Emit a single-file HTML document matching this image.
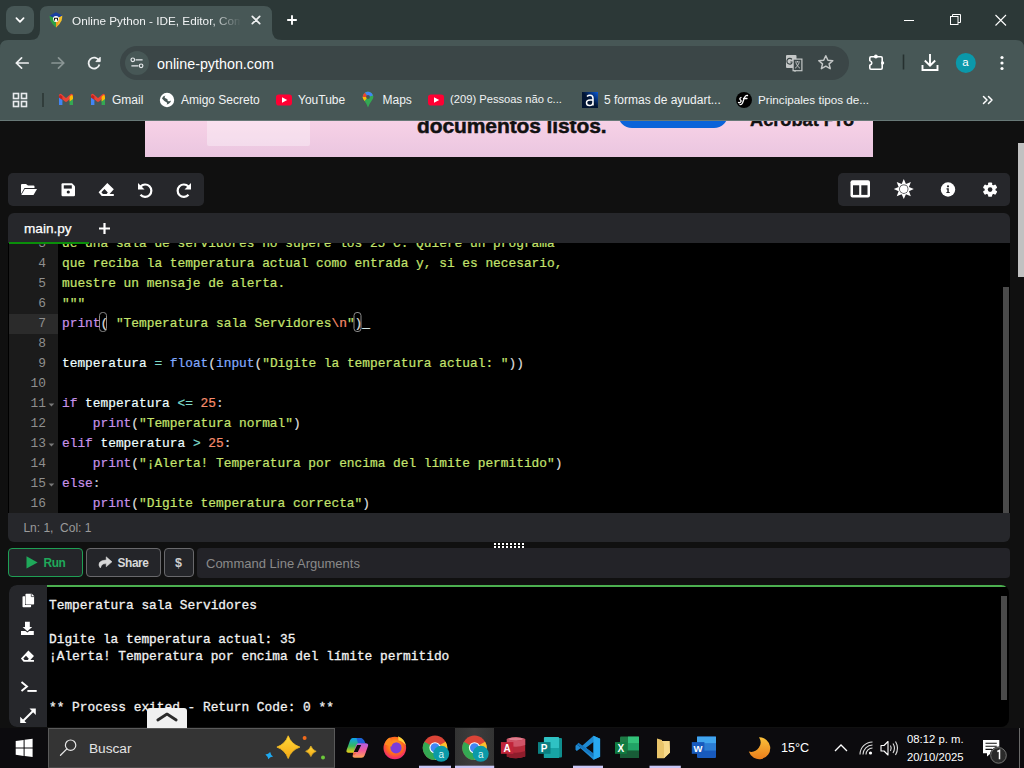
<!DOCTYPE html>
<html><head><meta charset="utf-8">
<style>
*{box-sizing:border-box;margin:0;padding:0}
html,body{width:1024px;height:768px;overflow:hidden;background:#101010;font-family:"Liberation Sans",sans-serif}
.a{position:absolute}
svg{position:absolute;overflow:visible}
#tabstrip{left:0;top:0;width:1024px;height:40px;background:#2c3837}
#toolbar{left:0;top:40px;width:1024px;height:80px;background:#475756}
.ui{color:#f1f3f4;font-size:12.5px;white-space:nowrap}
.mono{font-family:"Liberation Mono",monospace}
pre.mono{font-size:12.83px;line-height:20px}
#code{-webkit-text-stroke:0.2px currentColor}
.panel{background:#26272b}
</style></head><body>
<!-- ===== CHROME ===== -->
<div id="tabstrip" class="a"></div>
<div class="a" style="left:6px;top:6px;width:28px;height:28px;border-radius:8px;background:#475756"></div>
<svg style="left:0;top:0" width="1024" height="40"><path d="M16.4 18.2 L20 21.8 L23.6 18.2" fill="none" stroke="#fff" stroke-width="1.7" stroke-linecap="round" stroke-linejoin="round"/></svg>
<div id="toolbar" class="a"></div>
<div class="a" style="left:0;top:120px;width:1024px;height:1px;background:#687977"></div>
<svg style="left:0;top:0" width="1024" height="50">
 <path d="M30 40 Q40 40 40 30 L40 14 Q40 6 48 6 L264 6 Q272 6 272 14 L272 30 Q272 40 282 40 Z" fill="#475756"/>
 <path d="M0 40 L8 40 Q0 40 0 48 Z" fill="#2c3837"/><path d="M1024 40 L1016 40 Q1024 40 1024 48 Z" fill="#2c3837"/>
</svg>
<!-- favicon -->
<svg style="left:0;top:0" width="80" height="40">
 <path d="M49.6 15.7 L56 18.5 L56 27.4 Q51.8 24 50.3 20.5 Q49.6 18 49.6 15.7Z" fill="#2ea043"/>
 <path d="M62.3 15.6 L56 18.5 L56 27.4 Q60.2 24 61.6 20.5 Q62.3 18 62.3 15.6Z" fill="#f5c12a"/>
 <path d="M56 27.4 L56 22 L59 21 Q58 25 56 27.4Z" fill="#f59a22"/>
 <path d="M55.9 12.3 L62.3 15.6 L56 18.8 L49.6 15.7Z" fill="#1a3fa0"/>
 <circle cx="56" cy="19.1" r="3" fill="#fff"/>
 <path d="M54.2 20.6 L54.6 18.3 L57.4 18.3 L57.8 20.6" fill="none" stroke="#111" stroke-width="1.1"/>
</svg>
<div class="a ui" style="left:72px;top:14px;font-size:11.75px;color:#f1f3f4;width:169px;overflow:hidden;-webkit-mask-image:linear-gradient(90deg,#000 82%,transparent 100%)">Online Python - IDE, Editor, Compiler</div>
<svg style="left:0;top:0" width="1024" height="40">
 <path d="M252.3 16.3 L259.7 23.7 M259.7 16.3 L252.3 23.7" stroke="#eef0f1" stroke-width="1.7" stroke-linecap="round"/>
 <path d="M292 15.2 L292 24.8 M287.2 20 L296.8 20" stroke="#fff" stroke-width="1.9" stroke-linecap="butt"/>
 <path d="M904 20.5 L914 20.5" stroke="#fff" stroke-width="1"/>
 <rect x="950.5" y="16.5" width="7.5" height="8" fill="none" stroke="#fff" stroke-width="1"/>
 <path d="M952.5 16.5 L952.5 14.5 L960.5 14.5 L960.5 22.5 L958 22.5" fill="none" stroke="#fff" stroke-width="1"/>
 <path d="M995.5 15 L1006 25.5 M1006 15 L995.5 25.5" stroke="#fff" stroke-width="1.1"/>
</svg>
<!-- nav -->
<svg style="left:0;top:40px" width="1024" height="80">
 <path d="M28.2 23 L16.3 23 M21.6 17.8 L16.3 23 L21.6 28.2" fill="none" stroke="#eef0f1" stroke-width="1.7" stroke-linecap="round" stroke-linejoin="round"/>
 <path d="M52 23 L63.8 23 M58.5 17.8 L63.8 23 L58.5 28.2" fill="none" stroke="#8b9695" stroke-width="1.7" stroke-linecap="round" stroke-linejoin="round"/>
 <path d="M99 20.6 A5.5 5.5 0 1 0 99.4 24.5" fill="none" stroke="#eef0f1" stroke-width="1.8"/>
 <path d="M100.2 17.3 L100.2 21.6 L95.9 21.6 Z" fill="#eef0f1" stroke="#eef0f1" stroke-width="1" stroke-linejoin="round"/>
</svg>
<!-- omnibox -->
<div class="a" style="left:120px;top:46px;width:729px;height:34px;border-radius:17px;background:#3b4647"></div>
<div class="a" style="left:125px;top:51px;width:24px;height:24px;border-radius:12px;background:#475756"></div>
<svg style="left:0;top:40px" width="1024" height="80">
 <circle cx="132.8" cy="19.8" r="1.8" fill="none" stroke="#e8eaed" stroke-width="1.2"/>
 <path d="M135.6 19.8 L142.6 19.8 M131.4 25.8 L138.4 25.8" stroke="#e8eaed" stroke-width="1.3"/>
 <circle cx="141.1" cy="25.8" r="1.8" fill="none" stroke="#e8eaed" stroke-width="1.2"/>
</svg>
<div class="a ui" style="left:157px;top:55.5px;font-size:14.3px;color:#fff">online-python.com</div>
<!-- translate & star -->
<svg style="left:0;top:40px" width="1024" height="80">
 <rect x="786" y="15" width="10.5" height="13" rx="1" fill="#c4c7c7"/>
 <path d="M792 19.3 A2.9 2.9 0 1 0 792.6 22 L790.3 22" fill="none" stroke="#3b4647" stroke-width="1.2"/>
 <rect x="793.1" y="19.1" width="8.8" height="11.6" fill="#3b4647" stroke="#c4c7c7" stroke-width="1.2"/>
 <path d="M793.5 30.5 L795 32 L796.5 30.5Z" fill="#c4c7c7"/>
 <path d="M795 22 L800 22 M797.5 21 L797.5 22 M796 23 Q797.5 27 800 28.3 M799 23 Q797.5 27 795 28.3" fill="none" stroke="#c4c7c7" stroke-width="0.9"/>
 <path d="M825.8 15.8 L827.9 20.3 L832.8 20.7 L829.1 23.9 L830.2 28.7 L825.8 26.2 L821.4 28.7 L822.5 23.9 L818.8 20.7 L823.7 20.3 Z" fill="none" stroke="#c4c7c7" stroke-width="1.5" stroke-linejoin="round"/>
</svg>
<!-- right toolbar icons -->
<svg style="left:0;top:40px" width="1024" height="80">
 <path d="M871 16.8 L881 16.8 Q882.2 16.8 882.2 18 L882.2 28 Q882.2 29.2 881 29.2 L871 29.2 Q869.8 29.2 869.8 28 L869.8 25.2 Q871.8 24.2 871.8 22.9 Q871.8 21.6 869.8 20.6 L869.8 18 Q869.8 16.8 871 16.8Z" fill="none" stroke="#fff" stroke-width="1.6" stroke-linejoin="round"/><circle cx="875.9" cy="16.5" r="1.9" fill="#fff"/><circle cx="882.6" cy="22.9" r="1.6" fill="#fff"/>
 <path d="M903.5 14.5 L903.5 29.5" stroke="#26302f" stroke-width="1.6"/>
 <path d="M930 14 L930 25.5 M924.8 20.5 L930 25.7 L935.2 20.5 M922.5 25 L922.5 30 L937.5 30 L937.5 25" fill="none" stroke="#fff" stroke-width="1.9" stroke-linejoin="miter"/>
 <circle cx="965.8" cy="22.9" r="10" fill="#0b98aa"/>
 <circle cx="1002" cy="17.5" r="1.6" fill="#fff"/><circle cx="1002" cy="23" r="1.6" fill="#fff"/><circle cx="1002" cy="28.5" r="1.6" fill="#fff"/>
</svg>
<div class="a ui" style="left:962.3px;top:55.8px;font-size:11.5px;color:#fff">a</div>
<!-- bookmarks -->
<svg style="left:0;top:84px" width="1024" height="36">
 <g fill="none" stroke="#e8eaed" stroke-width="1.6">
  <rect x="13.5" y="9.5" width="5" height="5"/><rect x="21.5" y="9.5" width="5" height="5"/>
  <rect x="13.5" y="17.5" width="5" height="5"/><rect x="21.5" y="17.5" width="5" height="5"/>
 </g>
 <path d="M43 9 L43 23" stroke="#2a3433" stroke-width="1.5"/>
</svg>
<svg style="left:0;top:0" width="1024" height="120">
 <!-- gmail 1 & 2 -->
 <g id="gm">
  <path d="M59 97 L59 105 L62.4 105 L62.4 99.5 Z" fill="#4285f4"/>
  <path d="M69.6 99.5 L69.6 105 L73 105 L73 97 Z" fill="#34a853"/>
  <path d="M60.5 95.5 L66 100.3 L71.5 95.5" fill="none" stroke="#ea4335" stroke-width="3.2" stroke-linejoin="round" stroke-linecap="round"/>
  <path d="M69.6 96.7 L71.5 95 Q73 95 73 97 L73 99 L69.6 101.5Z" fill="#fbbc04"/>
  <path d="M59 97 Q59 95 60.5 95 L62.4 96.5 L62.4 100 L59 97.5Z" fill="#c5221f"/>
 </g>
 <use href="#gm" x="32"/>
 <!-- globe -->
 <circle cx="167" cy="100" r="7.2" fill="#fff"/>
 <path d="M162 98.5 Q162.5 96 165.5 95.5 Q163.5 97.5 166 98.5 Q168.5 99.5 167.5 101 Q170 101.5 171 100.5 Q170.5 103.5 166.5 104.5 Q168 103 166 102 Q164 101 162 98.5Z" fill="#475756"/>
 <!-- youtube -->
 <rect x="276" y="94.5" width="16" height="11" rx="2.8" fill="#ff0033"/>
 <path d="M282 97.3 L287.2 100 L282 102.7Z" fill="#fff"/>
 <rect x="428" y="94.5" width="16" height="11" rx="2.8" fill="#ff0033"/>
 <path d="M434 97.3 L439.2 100 L434 102.7Z" fill="#fff"/>
 <!-- maps -->
 <path d="M368 107.5 Q366.5 103.5 364.5 101 Q362.6 98.5 362.6 97 A5.4 5.4 0 0 1 373.4 97 Q373.4 98.5 371.5 101 Q369.5 103.5 368 107.5Z" fill="#34a853"/>
 <path d="M362.6 97 A5.4 5.4 0 0 1 365 92.6 L368 97 Z" fill="#ea4335"/>
 <path d="M365 92.6 A5.4 5.4 0 0 1 373 95.5 L368 97Z" fill="#4285f4"/>
 <path d="M362.6 97 Q362.6 98.5 364.5 101 L368 97Z" fill="#fbbc04"/>
 <circle cx="368" cy="97" r="1.9" fill="#475756"/>
 <!-- a icon -->
 <defs><linearGradient id="ag" x1="0" y1="1" x2="1" y2="0"><stop offset="0.5" stop-color="#021533"/><stop offset="1" stop-color="#0a5ad8"/></linearGradient></defs>
 <rect x="582" y="92" width="16" height="16" fill="url(#ag)"/>
 <path d="M587 96.5 Q588 95.3 590 95.3 Q593 95.3 593 98.5 L593 105.5 M593 100 L590 100 Q586.5 100 586.5 102.8 Q586.5 105.6 589.5 105.6 Q593 105.6 593 102" fill="none" stroke="#fff" stroke-width="1.5"/>
 <!-- sf -->
 <circle cx="744" cy="100" r="8" fill="#000"/>
 <path d="M741 97.5 Q739 98.5 740.5 100 Q742 101 740 102.5 Q739 103 738.5 102.5 M747.5 95.5 Q745.5 95 744.5 97.5 L742.5 103 Q741.5 105 740 104.5 M743.5 98.5 L747 98.5" fill="none" stroke="#fff" stroke-width="1.3" stroke-linecap="round"/>
 <!-- chevrons -->
 <path d="M983.5 96.5 L987 100 L983.5 103.5 M988.5 96.5 L992 100 L988.5 103.5" fill="none" stroke="#fff" stroke-width="1.5" stroke-linecap="round" stroke-linejoin="round"/>
</svg>
<div class="a ui" style="left:112px;top:93px;font-size:12px">Gmail</div>
<div class="a ui" style="left:181px;top:93px;font-size:12px">Amigo Secreto</div>
<div class="a ui" style="left:298px;top:93px;font-size:12px">YouTube</div>
<div class="a ui" style="left:382.5px;top:93px;font-size:12px">Maps</div>
<div class="a ui" style="left:450px;top:92.5px;font-size:11.2px;top:93px">(209) Pessoas não c...</div>
<div class="a ui" style="left:604px;top:93px;font-size:12px">5 formas de ayudart...</div>
<div class="a ui" style="left:758px;top:92.5px;font-size:11.7px">Principales tipos de...</div>

<!-- ===== PAGE ===== -->
<div class="a" style="left:145px;top:121px;width:728px;height:36px;overflow:hidden;background:linear-gradient(180deg,#f7d1e6,#eac6e0)">
 <div class="a" style="left:62px;top:0;width:103px;height:25px;background:rgba(255,255,255,0.35);border-radius:0 0 2px 2px"></div>
 <div class="a" style="left:272px;top:-7px;font:bold 21px 'Liberation Sans',sans-serif;color:#111;letter-spacing:-0.1px;-webkit-text-stroke:0.5px #111;white-space:nowrap">documentos listos.</div>
 <div class="a" style="left:473px;top:-21px;width:110px;height:28px;border-radius:14px;background:#0b63d9"></div>
 <div class="a" style="left:605px;top:-11px;font:bold 18.2px 'Liberation Sans',sans-serif;color:#111;-webkit-text-stroke:0.4px #111;white-space:nowrap">Acrobat Pro</div>
</div>
<!-- page scrollbar -->
<div class="a" style="left:1018px;top:143px;width:6px;height:133.5px;background:#c1c1c1"></div>

<div class="a panel" style="left:8px;top:173px;width:196px;height:33px;border-radius:5px"></div>
<div class="a panel" style="left:838px;top:173px;width:172px;height:33px;border-radius:5px"></div>
<svg style="left:0;top:0" width="1024" height="210">
 <!-- folder open -->
 <path d="M21 185 Q21 184 22 184 L26 184 L28 185.5 L33.5 185.5 Q34.5 185.5 34.5 186.5 L34.5 188 L24.5 188 L21 194 Z" fill="#fff"/>
 <path d="M24.8 189 L37 189 L33.5 195 L21.3 195 Z" fill="#fff"/>
 <!-- save -->
 <path d="M61.5 184.5 Q61.5 183.3 62.7 183.3 L72 183.3 L75 186.3 L75 195 Q75 196.2 73.8 196.2 L62.7 196.2 Q61.5 196.2 61.5 195 Z" fill="#fff"/>
 <rect x="63.8" y="185.3" width="8" height="3.3" fill="#26272b"/>
 <circle cx="68.3" cy="192" r="1.6" fill="#26272b"/>
 <!-- eraser -->
 <path id="ers" d="M107.3 182.9 L113.8 189.3 L109.6 193.9 L113.8 193.9 L113.8 195.9 L101.7 195.9 L98.6 192.2 Z M104.5 189 L107.8 192.4 L106.6 193.9 L102.9 193.9 L101.4 192.2 Z" fill="#fff" fill-rule="evenodd"/>
 <!-- undo -->
 <path d="M140.6 186.5 A6.2 6.2 0 1 1 140.5 194.8" fill="none" stroke="#fff" stroke-width="2.2"/>
 <path d="M138 183 L138 189.5 L144.5 189.5 Z" fill="#fff"/>
 <!-- redo -->
 <path d="M188.4 186.5 A6.2 6.2 0 1 0 188.5 194.8" fill="none" stroke="#fff" stroke-width="2.2"/>
 <path d="M191 183 L191 189.5 L184.5 189.5 Z" fill="#fff"/>
 <!-- columns -->
 <rect x="850.5" y="180.3" width="19.5" height="17.2" rx="2" fill="#fff"/>
 <rect x="853" y="185.3" width="6.2" height="9.6" fill="#26272b"/>
 <rect x="861.3" y="185.3" width="6.2" height="9.6" fill="#26272b"/>
 <!-- sun -->
 <g transform="translate(903.8 189.1)">
  <path d="M0.00 -10.00 L2.14 -5.17 L7.07 -7.07 L5.17 -2.14 L10.00 0.00 L5.17 2.14 L7.07 7.07 L2.14 5.17 L0.00 10.00 L-2.14 5.17 L-7.07 7.07 L-5.17 2.14 L-10.00 0.00 L-5.17 -2.14 L-7.07 -7.07 L-2.14 -5.17 Z" fill="#fff"/>
  <circle r="4.6" fill="#26272b"/><circle r="3.9" fill="#fff"/>
 </g>
 <!-- info -->
 <circle cx="948" cy="189.5" r="7.2" fill="#fff"/>
 <circle cx="948" cy="186.3" r="1.1" fill="#26272b"/>
 <path d="M946.5 188.3 L948.8 188.3 L948.8 192 L949.7 192 L949.7 193.1 L946.4 193.1 L946.4 192 L947.3 192 L947.3 189.4 L946.5 189.4Z" fill="#26272b"/>
 <!-- gear -->
 <g transform="translate(990.1 189.6)">
  <circle r="5.4" fill="#fff"/>
  <g fill="#fff"><rect x="-2" y="-7.2" width="4" height="14.4" rx="0.8"/><rect x="-2" y="-7.2" width="4" height="14.4" rx="0.8" transform="rotate(60)"/><rect x="-2" y="-7.2" width="4" height="14.4" rx="0.8" transform="rotate(120)"/></g>
  <circle r="2.3" fill="#26272b"/>
 </g>
</svg>

<!-- editor -->
<div class="a panel" style="left:8px;top:213px;width:1002px;height:30px;border-radius:6px 6px 0 0"></div>
<div class="a ui" style="left:24px;top:221px;font-size:13.6px;color:#fff;-webkit-text-stroke:0.25px #fff">main.py</div>
<div class="a" style="left:9px;top:242px;width:80px;height:2px;background:#0a8f0a;z-index:5"></div>
<svg style="left:0;top:0" width="1024" height="250"><path d="M104.5 223 L104.5 234 M99 228.5 L110 228.5" stroke="#fff" stroke-width="2.2"/></svg>
<div class="a" style="left:8px;top:243px;width:1002px;height:270px;background:#000;overflow:hidden">
 <div class="a" style="left:1px;top:0;width:49px;height:270px;background:#1b1b1b"></div>
 <div class="a" style="left:1px;top:71px;width:49px;height:20px;background:#2b2b2b"></div>
 <div class="a" style="left:994.5px;top:44px;width:6.5px;height:226px;background:#4a4a4a"></div>
 <svg style="left:0;top:0" width="1002" height="270">
  <path d="M40.6 160.5 L46.3 160.5 L43.45 163.5Z M40.6 200.5 L46.3 200.5 L43.45 203.5Z M40.6 240.5 L46.3 240.5 L43.45 243.5Z" fill="#7a7a7a"/>
  <rect x="91.5" y="69.5" width="7" height="19" rx="3" fill="none" stroke="#8a8a8a" stroke-width="1"/>
  <rect x="346" y="69.5" width="7" height="19" rx="3" fill="none" stroke="#8a8a8a" stroke-width="1"/>
 </svg>
 <pre id="gut" class="a mono" style="left:0;top:-9px;width:38px;text-align:right;color:#8f8f8f">3
4
5
6
7
8
9
10
11
12
13
14
15
16
17</pre>
 <pre id="code" class="a mono" style="left:54px;top:-9px;color:#eeffff"><span style="color:#c5e46e">de una sala de servidores no supere los 25°C. Quiere un programa</span>
<span style="color:#c5e46e">que reciba la temperatura actual como entrada y, si es necesario,</span>
<span style="color:#c5e46e">muestre un mensaje de alerta.</span>
<span style="color:#c5e46e">&quot;&quot;&quot;</span>
<span style="color:#c792ea">print</span><span style="color:#dedede">(</span><span style="color:#eeffff"> </span><span style="color:#c5e46e">&quot;Temperatura sala Servidores</span><span style="color:#f78c6c">\n</span><span style="color:#c5e46e">&quot;</span><span style="color:#dedede">)</span><span style="color:#eeffff">_</span>

<span style="color:#eeffff">temperatura</span><span style="color:#7fdbca"> = </span><span style="color:#82aaff">float</span><span style="color:#dedede">(</span><span style="color:#82aaff">input</span><span style="color:#dedede">(</span><span style="color:#c5e46e">&quot;Digite la temperatura actual: &quot;</span><span style="color:#dedede">))</span>

<span style="color:#c792ea">if</span><span style="color:#eeffff"> temperatura </span><span style="color:#7fdbca">&lt;=</span><span style="color:#eeffff"> </span><span style="color:#f78c6c">25</span><span style="color:#bfc7d5">:</span>
<span style="color:#eeffff">    </span><span style="color:#c792ea">print</span><span style="color:#dedede">(</span><span style="color:#c5e46e">&quot;Temperatura normal&quot;</span><span style="color:#dedede">)</span>
<span style="color:#c792ea">elif</span><span style="color:#eeffff"> temperatura </span><span style="color:#7fdbca">&gt;</span><span style="color:#eeffff"> </span><span style="color:#f78c6c">25</span><span style="color:#bfc7d5">:</span>
<span style="color:#eeffff">    </span><span style="color:#c792ea">print</span><span style="color:#dedede">(</span><span style="color:#c5e46e">&quot;¡Alerta! Temperatura por encima del límite permitido&quot;</span><span style="color:#dedede">)</span>
<span style="color:#c792ea">else</span><span style="color:#bfc7d5">:</span>
<span style="color:#eeffff">    </span><span style="color:#c792ea">print</span><span style="color:#dedede">(</span><span style="color:#c5e46e">&quot;Digite temperatura correcta&quot;</span><span style="color:#dedede">)</span>
</pre>
</div>
<div class="a panel" style="left:8px;top:513px;width:1002px;height:29px;border-radius:0 0 6px 6px"></div>
<div class="a ui" style="left:23.4px;top:521px;font-size:12px;color:#9b9b9b">Ln: 1,&nbsp; Col: 1</div>
<svg style="left:0;top:0" width="1024" height="560"><g fill="#fff" id="grip"><rect x="494" y="543" width="2" height="2"/><rect x="494" y="546" width="2" height="2"/><rect x="498" y="543" width="2" height="2"/><rect x="498" y="546" width="2" height="2"/><rect x="502" y="543" width="2" height="2"/><rect x="502" y="546" width="2" height="2"/><rect x="506" y="543" width="2" height="2"/><rect x="506" y="546" width="2" height="2"/><rect x="510" y="543" width="2" height="2"/><rect x="510" y="546" width="2" height="2"/><rect x="514" y="543" width="2" height="2"/><rect x="514" y="546" width="2" height="2"/><rect x="518" y="543" width="2" height="2"/><rect x="518" y="546" width="2" height="2"/><rect x="522" y="543" width="2" height="2"/><rect x="522" y="546" width="2" height="2"/></g></svg>
<!-- run row -->
<div class="a" style="left:8px;top:548.3px;width:75px;height:29.2px;border:1px solid #1f9f55;border-radius:4px;background:#242529"></div>
<div class="a" style="left:86px;top:548.3px;width:75px;height:29.2px;border:1px solid #69696c;border-radius:4px;background:#242529"></div>
<div class="a" style="left:164px;top:548.3px;width:29.7px;height:29.2px;border:1px solid #69696c;border-radius:4px;background:#242529"></div>
<div class="a" style="left:197.4px;top:548.3px;width:812.6px;height:29.3px;border-radius:4px;background:#232328"></div>
<svg style="left:0;top:540px" width="1024" height="40">
 <path d="M26.5 16.3 L37.6 22.4 L26.5 28.5 Z" fill="#1fa95a"/>
 <path d="M100.3 28 Q98 25 99.5 22.5 Q101.3 20 106.2 20 L106.2 16.8 L112 21.8 L106.2 26.8 L106.2 23.6 Q102.5 23.6 101.5 25.5 Q101 26.8 100.3 28Z" fill="#d8d8d8" stroke="#d8d8d8" stroke-width="0.5" stroke-linejoin="round"/>
</svg>
<div class="a" style="left:43.5px;top:556px;font:bold 11.9px 'Liberation Sans',sans-serif;color:#1fa95a;letter-spacing:-0.45px">Run</div>
<div class="a" style="left:117.6px;top:556px;font:bold 11.9px 'Liberation Sans',sans-serif;color:#d8d8d8;letter-spacing:-0.45px">Share</div>
<div class="a" style="left:175px;top:556px;font:bold 12.5px 'Liberation Sans',sans-serif;color:#cfcfcf">$</div>
<div class="a ui" style="left:206px;top:555.5px;font-size:13px;color:#8a8a8a">Command Line Arguments</div>

<!-- output -->
<div class="a" style="left:9px;top:584.7px;width:1000px;height:142.3px;background:#000;border-radius:8px;overflow:hidden">
 <div class="a" style="left:0;top:0;width:38px;height:142.3px;background:#26272b"></div>
 <div class="a" style="left:38px;top:0;width:961px;height:2.7px;background:#4caf50"></div>
 <div class="a" style="left:992px;top:11.5px;width:6px;height:103.6px;background:#4a4a4a"></div>
 <pre class="a mono" style="left:40px;top:12px;font-size:12.83px;line-height:17px;color:#f2f2f2;-webkit-text-stroke:0.3px #f2f2f2">Temperatura sala Servidores

Digite la temperatura actual: 35
¡Alerta! Temperatura por encima del límite permitido


** Process exited - Return Code: 0 **</pre>
</div>
<svg style="left:0;top:0" width="1024" height="768">
 <!-- copy -->
 <path d="M22.5 597 Q22.5 596.3 23.2 596.3 L25 596.3 L25 605 L31.1 605 L31.1 606.5 Q31.1 607.2 30.4 607.2 L23.2 607.2 Q22.5 607.2 22.5 606.5 Z" fill="#fff"/>
 <path d="M26.2 593.8 L31.8 593.8 L34.1 596.1 L34.1 603.8 Q34.1 604.5 33.4 604.5 L26.2 604.5 Q25.5 604.5 25.5 603.8 L25.5 594.5 Q25.5 593.8 26.2 593.8Z" fill="#fff"/>
 <path d="M31.3 593.8 L31.3 596.6 L34.1 596.6" fill="none" stroke="#26272b" stroke-width="0.7"/>
 <!-- download -->
 <path d="M25 621.8 L29.8 621.8 L29.8 627 L32.2 627 L27.4 631.2 L22.6 627 L25 627Z" fill="#fff"/>
 <path d="M21 631 L25.5 631 L27.4 632.6 L29.3 631 L33.8 631 L33.8 634.9 L21 634.9Z" fill="#fff"/>
 <!-- eraser -->
 <use href="#ers" transform="translate(20.9 650.5) scale(0.86 0.86) translate(-98.6 -182.9)"/>
 <!-- terminal -->
 <path d="M21.5 682 L27 686.5 L21.5 691" fill="none" stroke="#fff" stroke-width="1.9"/>
 <rect x="27.4" y="690" width="9.3" height="1.9" fill="#fff"/>
 <!-- expand -->
 <path d="M23 721 L33.5 710.5" stroke="#fff" stroke-width="1.9"/>
 <path d="M29.5 708.6 L35.8 708.6 L35.8 714.9Z M20.2 716.7 L20.2 723 L26.5 723Z" fill="#fff"/>
</svg>
<!-- caret tab -->
<div class="a" style="left:147.3px;top:708.2px;width:39.4px;height:20px;background:#f0f0f0;border-radius:3px 3px 0 0"></div>
<svg style="left:0;top:0" width="1024" height="768"><path d="M157.8 720 L167 714 L176.2 720" fill="none" stroke="#2a2a2a" stroke-width="2.7" stroke-linecap="round" stroke-linejoin="round"/></svg>

<!-- ===== TASKBAR ===== -->
<div class="a" style="left:0;top:728px;width:1024px;height:40px;background:#0c0b0e"></div>
<div class="a" style="left:48.2px;top:728px;width:287px;height:40px;background:#343434;border:1px solid #5a5a5a;border-bottom:1px solid #4a4a4a"></div>
<div class="a" style="left:455px;top:728px;width:39.2px;height:40px;background:linear-gradient(90deg,#333,#3d3d3d 50%,#333)"></div>
<svg style="left:0;top:0" width="1024" height="768">
 <!-- windows logo -->
 <path d="M15.7 741 L23.6 739.9 L23.6 747.4 L15.7 747.4Z M24.6 739.8 L32.6 738.7 L32.6 747.4 L24.6 747.4Z M15.7 748.4 L23.6 748.4 L23.6 755.9 L15.7 754.8Z M24.6 748.4 L32.6 748.4 L32.6 757.1 L24.6 756Z" fill="#fff"/>
 <!-- magnifier -->
 <circle cx="70.6" cy="745.2" r="5.2" fill="none" stroke="#e6e6e6" stroke-width="1.2"/>
 <path d="M66.9 748.9 L60.5 755.3" stroke="#e6e6e6" stroke-width="1.3" stroke-linecap="round"/>
 <!-- sparkles -->
 <defs>
  <linearGradient id="yg" x1="0" y1="0" x2="0" y2="1"><stop offset="0" stop-color="#ffd93a"/><stop offset="1" stop-color="#f5a713"/></linearGradient>
  <linearGradient id="cop1" x1="0" y1="0" x2="0" y2="1"><stop offset="0" stop-color="#0aa2f0"/><stop offset="0.55" stop-color="#38b85a"/><stop offset="1" stop-color="#f2d114"/></linearGradient>
  <linearGradient id="cop2" x1="0" y1="0" x2="0" y2="1"><stop offset="0" stop-color="#b05ee8"/><stop offset="0.5" stop-color="#f05a9a"/><stop offset="1" stop-color="#ffa555"/></linearGradient>
  <radialGradient id="ffg" cx="0.5" cy="0.4" r="0.6"><stop offset="0" stop-color="#ffbd2e"/><stop offset="0.6" stop-color="#ff6a1a"/><stop offset="1" stop-color="#f0207a"/></radialGradient>
  <linearGradient id="moon" x1="0" y1="0" x2="0" y2="1"><stop offset="0" stop-color="#fbc13a"/><stop offset="1" stop-color="#ea7d1b"/></linearGradient>
 </defs>
 <path d="M288.2 735.8 Q291.2 744.1 299.9 747.1 Q291.2 750.1 288.2 758.5 Q285.2 750.1 276.9 747.1 Q285.2 744.1 288.2 735.8Z" fill="url(#yg)" stroke="#f7be22" stroke-width="0.8" stroke-linejoin="round"/>
 <path d="M310.9 746 Q312.3 749.9 316.2 751.3 Q312.3 752.7 310.9 756.6 Q309.5 752.7 305.6 751.3 Q309.5 749.9 310.9 746Z" fill="url(#yg)" stroke="#f7be22" stroke-width="0.6" stroke-linejoin="round"/>
 <path d="M269.2 751.8 Q270.3 754.3 273.2 755.5 Q270.5 756.6 269.2 759.4 Q268 756.6 265.2 755.5 Q268 754.3 269.2 751.8Z" fill="#1ea9f0" transform="rotate(15 269.2 755.6)"/>
 <circle cx="304.6" cy="738" r="2" fill="#f26a1b"/>
 <circle cx="323" cy="757.5" r="2" fill="#6cc93a"/>
 <!-- copilot -->
 <path d="M352.5 738 L360 738 Q363 738 362 741 L358.5 751 Q357.8 752.8 355.8 752.8 L348.5 752.8 Q345.8 752.8 346.6 750 L350 740.5 Q350.8 738 352.5 738Z" fill="url(#cop1)"/>
 <path d="M356.5 738 L360 738 Q363.2 738 364.2 740.5 L365.5 743.5 L358 743.5Z" fill="#1e5fd8"/>
 <path d="M358.5 743.2 L365.5 743.2 Q368.8 743.2 368 746 L364.6 755.6 Q363.8 757.8 361.5 757.8 L354.8 757.8 Q352 757.8 352.8 755 L356 745.5 Q356.8 743.2 358.5 743.2Z" fill="url(#cop2)"/>
 <path d="M352.8 755 L353.5 752.8 L356.5 752.8 Q354.5 756 352.8 755Z" fill="#f06a3a"/>
 <path d="M357.2 745 L361.2 745 L357.8 752 L353.8 752Z" fill="#0c0b0e"/>
 <!-- firefox -->
 <circle cx="394.8" cy="748" r="11.3" fill="url(#ffg)"/>
 <path d="M398 736.2 Q404.5 738.5 406 746 Q403 741 398.5 740.5Z" fill="#ffd23a"/>
 <circle cx="396" cy="747.8" r="5.6" fill="#7b3ddb"/>
 <path d="M384.5 744.5 Q386 739 390 737.5 L391 741.5 Q393.5 741 396 742.3 Q392 743 391.5 746.5 Q388 745.5 384.5 744.5Z" fill="#ff8a1f"/>
 <!-- chrome icons -->
 <g id="chr">
  <circle cx="435" cy="747.8" r="12.2" fill="#db4437"/>
  <path d="M435 747.8 L445.6 741.7 A12.2 12.2 0 0 1 435 760 Z" fill="#fbc02d"/>
  <path d="M435 747.8 L435 760 A12.2 12.2 0 0 1 424.4 741.7 Z" fill="#34a853"/>
  <circle cx="435" cy="747.8" r="5.6" fill="#fff"/>
  <circle cx="435" cy="747.8" r="4.5" fill="#4285f4"/>
  <circle cx="441.2" cy="753.8" r="8" fill="#0c9aa8"/>
  <text x="441.2" y="757.5" font-family="Liberation Sans" font-size="10" fill="#d8f4f4" text-anchor="middle">a</text>
 </g>
 <use href="#chr" x="39.5"/>
 <!-- access -->
 <path d="M506.8 739 Q516 735.5 525.2 739 L525.2 756.5 Q516 760 506.8 756.5Z" fill="#b52a3a"/>
 <path d="M506.8 739 Q516 735.5 525.2 739 Q516 742.5 506.8 739Z" fill="#e07d8d"/>
 <path d="M506.8 739 Q516 742.5 525.2 739 L525.2 745 Q516 748.5 506.8 745Z" fill="#d05468"/>
 <path d="M506.8 751 Q516 754.5 525.2 751 L525.2 756.5 Q516 760 506.8 756.5Z" fill="#8f1d2c"/>
 <rect x="500.9" y="742.1" width="12.5" height="11.7" fill="#c1253a"/>
 <text x="507.1" y="751.8" font-family="Liberation Sans" font-weight="bold" font-size="10" fill="#fff" text-anchor="middle">A</text>
 <!-- publisher -->
 <rect x="546" y="738" width="16" height="19.5" rx="1" fill="#0f8e8e"/>
 <rect x="543.9" y="736.9" width="15.2" height="21.2" rx="1" fill="#2fc2c4"/>
 <rect x="543.9" y="748" width="15.2" height="10" fill="#17a3a5"/>
 <rect x="538" y="742.1" width="12.5" height="11.7" fill="#0b7f82"/>
 <text x="544.2" y="751.8" font-family="Liberation Sans" font-weight="bold" font-size="10" fill="#fff" text-anchor="middle">P</text>
 <!-- vscode -->
 <path d="M593.5 735.7 L600.1 738.8 L600.1 756.8 L593.5 759.8 L580.5 748.3 L576.8 751 L575.5 749.8 L575.5 745.8 L576.8 744.6 L580.5 747.3Z M593.5 742 L586 747.8 L593.5 753.6Z" fill="#1f8ad2" fill-rule="evenodd"/>
 <path d="M593.5 735.7 L600.1 738.8 L600.1 756.8 L593.5 759.8Z" fill="#28a8f0"/>
 <path d="M576.8 744.6 L593.5 757 L593.5 753.6 L578.5 742.8Z" fill="#1577c0"/>
 <!-- excel -->
 <rect x="620" y="736.6" width="19" height="21.4" rx="1" fill="#1d7a45"/>
 <rect x="628" y="736.6" width="11" height="7" fill="#33c27a"/>
 <rect x="628" y="743.6" width="11" height="7" fill="#21a366"/>
 <rect x="620" y="750.6" width="19" height="7.4" fill="#185c37"/>
 <rect x="615" y="742.1" width="11.8" height="11.7" fill="#107c41"/>
 <text x="620.9" y="751.8" font-family="Liberation Sans" font-weight="bold" font-size="10" fill="#fff" text-anchor="middle">X</text>
 <!-- folder -->
 <path d="M657 738.5 L662 740 L662 741 L669.5 741 L670 752.5 L664 758.3 L657 758.3Z" fill="#e9c46a"/>
 <path d="M662 741 L669.5 741 L670 752.5 L664 758.3 L664 744 Z" fill="#f7d98a"/>
 <!-- word -->
 <rect x="697" y="736.6" width="19" height="21.4" rx="1" fill="#185abd"/>
 <rect x="697" y="736.6" width="19" height="7" fill="#41a5ee"/>
 <rect x="697" y="743.6" width="19" height="7" fill="#2b7cd3"/>
 <rect x="691.8" y="742.1" width="12.6" height="11.7" fill="#185abd"/>
 <text x="698.1" y="751.8" font-family="Liberation Sans" font-weight="bold" font-size="9.5" fill="#fff" text-anchor="middle">W</text>
 <!-- indicators -->
 <rect x="419" y="765.7" width="32" height="2.3" fill="#c8c6f6"/>
 <rect x="455" y="765.7" width="39.2" height="2.3" fill="#c8c6f6"/>
 <rect x="573" y="765.7" width="30" height="2.3" fill="#c8c6f6"/>
 <rect x="649.5" y="765.7" width="31.3" height="2.3" fill="#c8c6f6"/>
 <!-- moon -->
 <path d="M759 737.2 A11 11 0 1 1 748.8 751.6 A9.5 9.5 0 0 0 759 737.2Z" fill="url(#moon)"/>
 <!-- caret -->
 <path d="M835 751 L841 745 L847 751" fill="none" stroke="#fff" stroke-width="1.3"/>
 <!-- wifi -->
 <g fill="none" stroke="#ddd" stroke-width="1.1">
  <path d="M860 754.5 A12.5 12.5 0 0 1 872.5 742"/>
  <path d="M863 754.5 A9.5 9.5 0 0 1 872.5 745"/>
  <path d="M866 754.5 A6.5 6.5 0 0 1 872.5 748"/>
 </g>
 <circle cx="870.5" cy="753" r="1.6" fill="#fff"/>
 <!-- speaker -->
 <path d="M881 745.5 L884 745.5 L888 741.5 L888 755 L884 751 L881 751Z" fill="none" stroke="#fff" stroke-width="1.1" stroke-linejoin="round"/>
 <path d="M890.5 745.5 Q892 748.3 890.5 751 M893 743.5 Q896 748.3 893 753 M895.5 741.5 Q899.5 748.3 895.5 755" fill="none" stroke="#ddd" stroke-width="1.1"/>
 <!-- notification -->
 <path d="M983 740 L999.3 740 L999.3 753.3 L991 753.3 L987 756.5 L987 753.3 L983 753.3Z" fill="#fff"/>
 <path d="M985.5 743.2 L996.8 743.2 M985.5 746.3 L996.8 746.3 M985.5 749.4 L992 749.4" stroke="#111" stroke-width="1.1"/>
 <circle cx="998.5" cy="755.4" r="8.2" fill="#2a2a2a" stroke="#111" stroke-width="1.2"/>
 <circle cx="998.5" cy="755.4" r="7.8" fill="none" stroke="#8a8a8a" stroke-width="0.8"/>
 <path d="M997.3 751.5 L999.5 750.5 L999.5 759.3" fill="none" stroke="#fff" stroke-width="1.5"/>
 <path d="M1019.5 728 L1019.5 768" stroke="#6a6a6a" stroke-width="1"/>
</svg>
<div class="a ui" style="left:88.9px;top:740.8px;font-size:13.7px;color:#e4e4e4">Buscar</div>
<div class="a ui" style="left:781px;top:741.3px;font-size:12.6px;color:#fff">15°C</div>
<div class="a ui" style="left:907px;top:733.2px;font-size:11.3px;color:#fff">08:12 p. m.</div>
<div class="a ui" style="left:907px;top:751px;font-size:11.3px;color:#fff">20/10/2025</div>
</body></html>
